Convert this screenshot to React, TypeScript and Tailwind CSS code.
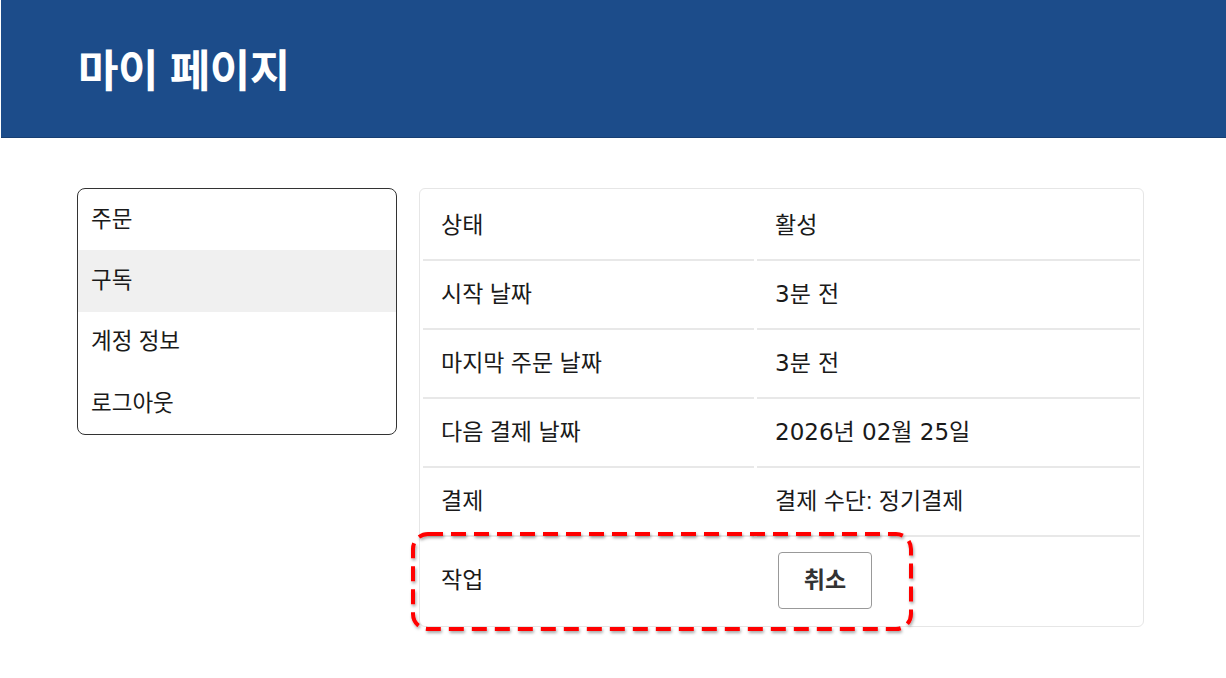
import React from "react";

const FONT = { fontFamily: '"Liberation Sans", "Noto Sans CJK KR", sans-serif' };
const NUM_FONT = { fontFamily: '"DejaVu Sans", "Noto Sans CJK KR", sans-serif' };

const rows: [string, string, boolean][] = [
  ["상태", "활성", false],
  ["시작 날짜", "3분 전", true],
  ["마지막 주문 날짜", "3분 전", true],
  ["다음 결제 날짜", "2026년 02월 25일", true],
  ["결제", "결제 수단: 정기결제", false],
];

const menu = ["주문", "구독", "계정 정보", "로그아웃"];

export default function App() {
  return (
    <div className="min-h-[678px] bg-white text-[#1a1a1a]" style={FONT}>
      <header className="ml-px h-[138px] bg-[#1c4c8a] border-b border-[#173f73] flex items-center pl-[77px] pt-[7px]">
        <h1 className="text-[44px] font-bold text-white leading-none tracking-[-0.5px]">마이 페이지</h1>
      </header>

      <main className="flex items-start gap-[22px] pl-[77px] pr-[82px] pt-[50px]">
        <nav className="w-[320px] shrink-0 border border-[#333] rounded-[8px] overflow-hidden">
          {menu.map((m) => (
            <div
              key={m}
              className={`h-[61.25px] flex items-center pl-[13px] text-[22.5px] ${m === "구독" ? "bg-[#f0f0f0]" : ""}`}
            >
              {m}
            </div>
          ))}
        </nav>

        <section className="relative flex-1 border border-[#e6e6e6] rounded-[6px] pt-[3px] pb-[2px]">
          <table className="w-full border-separate border-spacing-[3px] text-[23px]">
            <tbody>
              {rows.map(([k, v, num]) => (
                <tr key={k}>
                  <td className="w-[331px] h-[66px] px-[18px] pb-[4px] border-b-2 border-[#e8e8e8] align-middle">{k}</td>
                  <td
                    className="h-[66px] px-[18px] pb-[4px] border-b-2 border-[#e8e8e8] align-middle"
                    style={num ? NUM_FONT : undefined}
                  >
                    {v}
                  </td>
                </tr>
              ))}
              <tr>
                <td className="w-[331px] px-[18px] align-middle">작업</td>
                <td className="px-[18px] py-[12px] align-middle">
                  <button className="ml-[3px] w-[94px] h-[57px] border border-[#999] rounded-[4px] bg-white text-[23px] font-bold text-[#333]">
                    취소
                  </button>
                </td>
              </tr>
            </tbody>
          </table>

          <svg
            className="absolute pointer-events-none"
            style={{ left: -9, top: 343, width: 504, height: 101, overflow: "visible" }}
            viewBox="0 0 504 101"
          >
            <defs>
              <filter id="sh" x="-10%" y="-20%" width="120%" height="140%">
                <feDropShadow dx="1" dy="2" stdDeviation="1.5" floodColor="#000" floodOpacity="0.35" />
              </filter>
            </defs>
            <rect
              x="2"
              y="2"
              width="498"
              height="95"
              rx="15"
              ry="15"
              fill="none"
              stroke="#ff0000"
              strokeWidth="4"
              strokeDasharray="15 8"
              filter="url(#sh)"
            />
          </svg>
        </section>
      </main>
    </div>
  );
}
